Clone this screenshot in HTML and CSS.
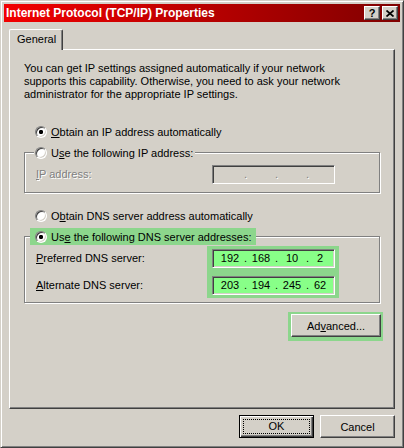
FILE: index.html
```html
<!DOCTYPE html>
<html lang="en">
<head>
    <meta charset="UTF-8">
    <meta name="viewport" content="width=device-width, initial-scale=1.0">
    <title>Internet Protocol (TCP/IP) Properties</title>
    <link rel="stylesheet" href="styles.css">
</head>
<body>
    <div class="window">
        <div class="titlebar">
            <span class="title">Internet Protocol (TCP/IP) Properties</span>
            <div class="caption-buttons">
                <button class="cap-btn help">?</button>
                <button class="cap-btn close">
                    <svg width="8" height="7" viewBox="0 0 8 7"><path d="M0.5 0.5 L7.5 6.5 M7.5 0.5 L0.5 6.5" stroke="#000" stroke-width="1.7" fill="none"/></svg>
                </button>
            </div>
        </div>

        <div class="client">
            <div class="tabs">
                <div class="tab active">General</div>
            </div>

            <div class="panel">
                <p class="intro">You can get IP settings assigned automatically if your network<br>supports this capability. Otherwise, you need to ask your network<br>administrator for the appropriate IP settings.</p>

                <!-- IP address -->
                <div class="option first"><span class="radio on"></span><span><u>O</u>btain an IP address automatically</span></div>
                <fieldset class="group">
                    <legend class="option"><span class="radio"></span><span>U<u>s</u>e the following IP address:</span></legend>
                    <div class="field-row">
                        <span class="label disabled"><u>I</u>P address:</span>
                        <div class="ipbox disabled">
                            <span class="octet"></span><span class="dot">.</span>
                            <span class="octet"></span><span class="dot">.</span>
                            <span class="octet"></span><span class="dot">.</span>
                            <span class="octet last"></span>
                        </div>
                    </div>
                </fieldset>

                <!-- DNS -->
                <div class="option spaced"><span class="radio"></span><span>O<u>b</u>tain DNS server address automatically</span></div>
                <fieldset class="group dns">
                    <legend class="option hl"><span class="radio on"></span><span>Us<u>e</u> the following DNS server addresses:</span></legend>
                    <div class="dns-grid">
                        <div class="dns-labels">
                            <span class="label"><u>P</u>referred DNS server:</span>
                            <span class="label"><u>A</u>lternate DNS server:</span>
                        </div>
                        <div class="dns-boxes">
                            <div class="ipbox green">
                                <span class="octet">192</span><span class="dot">.</span>
                                <span class="octet">168</span><span class="dot">.</span>
                                <span class="octet">10</span><span class="dot">.</span>
                                <span class="octet last">2</span>
                            </div>
                            <div class="ipbox green">
                                <span class="octet">203</span><span class="dot">.</span>
                                <span class="octet">194</span><span class="dot">.</span>
                                <span class="octet">245</span><span class="dot">.</span>
                                <span class="octet last">62</span>
                            </div>
                        </div>
                    </div>
                </fieldset>

                <div class="advanced-row">
                    <div class="hilite">
                        <button class="btn wide">Ad<u>v</u>anced...</button>
                    </div>
                </div>
            </div>

            <div class="dialog-buttons">
                <button class="btn default"><span class="focus">OK</span></button>
                <button class="btn">Cancel</button>
            </div>
        </div>
    </div>
</body>
</html>
```

FILE: styles.css
```css
* {
    box-sizing: border-box;
    margin: 0;
    padding: 0;
}

body {
    background-color: #d4d0c8;
    font-family: "Liberation Sans", Arial, sans-serif;
    font-size: 11px;
    color: #000;
}

button {
    font: inherit;
    color: #000;
    background: #d4d0c8;
}

.window {
    width: 404px;
    height: 448px;
    border: 1px solid;
    border-color: #d4d0c8 #404040 #404040 #d4d0c8;
    box-shadow: inset 1px 1px #fff, inset -1px -1px #808080;
    padding: 3px;
}

/* title bar */
.titlebar {
    height: 18px;
    display: flex;
    align-items: center;
    justify-content: space-between;
    padding: 0 2px 0 2px;
    background: linear-gradient(to right, #f20000, #800000);
}

.title {
    color: #fff;
    font-weight: bold;
    font-size: 12px;
}

.caption-buttons {
    display: flex;
    gap: 2px;
}

.cap-btn {
    width: 16px;
    height: 14px;
    display: flex;
    align-items: center;
    justify-content: center;
    border: 1px solid;
    border-color: #fff #404040 #404040 #fff;
    box-shadow: inset -1px -1px #808080;
    font-weight: bold;
    font-size: 11px;
    line-height: 12px;
}

/* tabs */
.client {
    padding: 7px 5px 0;
}

.tabs {
    display: flex;
}

.tab {
    position: relative;
    z-index: 1;
    width: 54px;
    height: 21px;
    margin-bottom: -1px;
    padding-left: 7px;
    line-height: 19px;
    border: 1px solid;
    border-bottom: 0;
    border-color: #fff #404040 #fff #fff;
    border-radius: 2px 2px 0 0;
    box-shadow: inset -1px 0 #808080;
    background: #d4d0c8;
}

.panel {
    height: 360px;
    border: 1px solid;
    border-color: #fff #404040 #404040 #fff;
    box-shadow: inset -1px -1px #808080;
    padding: 12px 13px 0 14px;
}

.intro {
    line-height: 13px;
}

/* radio options */
.option {
    display: flex;
    align-items: center;
    height: 17px;
    margin-left: 11px;
    white-space: nowrap;
}

.option.first {
    margin-top: 22px;
}

.option.spaced {
    margin-top: 14px;
}

.radio {
    width: 12px;
    height: 12px;
    flex-shrink: 0;
    margin-right: 4px;
    border-radius: 50%;
    border: 1px solid;
    border-color: #808080 #fff #fff #808080;
    box-shadow: inset 1px 1px #404040, inset -1px -1px #d4d0c8;
    background: #fff;
}

.radio.on {
    background: radial-gradient(circle, #000 1.9px, #fff 2.4px);
}

/* group boxes */
.group {
    border: 1px solid #808080;
    box-shadow: 1px 1px #fff, inset 1px 1px #fff;
    margin: 4px 1px 0 0;
    padding: 4px 0 8px 11px;
    min-width: 0;
}

.group.dns {
    padding-top: 1px;
    padding-bottom: 4px;
}

.group legend.option {
    margin-left: -2px;
    padding: 0 2px 0 1px;
    background: #d4d0c8;
}

.group legend.option.hl {
    margin-left: -6px;
    padding: 0 4px 0 5px;
    background: #8cd68c;
}

.field-row {
    display: grid;
    grid-template-columns: 176px 123px;
    align-items: center;
}

.label {
    line-height: 19px;
    white-space: nowrap;
}

.disabled {
    color: #808080;
    text-shadow: 1px 1px #fff;
}

/* ip address boxes */
.ipbox {
    display: flex;
    width: 123px;
    height: 19px;
    padding-left: 5px;
    line-height: 17px;
    border: 1px solid;
    border-color: #808080 #fff #fff #808080;
    box-shadow: inset 1px 1px #404040, inset -1px -1px #d4d0c8;
    background: #fff;
}

.ipbox.disabled {
    background: #d4d0c8;
}

.ipbox.green {
    background: #88ff88;
}

.octet {
    width: 24px;
    text-align: center;
}

.octet.last {
    width: 18px;
}

.dot {
    width: 7px;
    text-align: center;
}

.dns-grid {
    display: flex;
}

.dns-labels {
    width: 171px;
    padding-top: 3px;
    display: flex;
    flex-direction: column;
    gap: 8px;
}

.dns-boxes {
    display: flex;
    flex-direction: column;
    gap: 8px;
    padding: 3px 4px 3px 5px;
    background: #8cd68c;
}

/* buttons */
.advanced-row {
    display: flex;
    justify-content: flex-end;
    margin: 9px -2px 0 0;
}

.hilite {
    padding: 2px 2px 4px 3px;
    background: #8cd68c;
}

.btn {
    width: 75px;
    height: 23px;
    border: 1px solid;
    border-color: #fff #404040 #404040 #fff;
    box-shadow: inset -1px -1px #808080;
}

.btn.wide {
    width: 90px;
}

.btn.default {
    border-color: #000;
    box-shadow: inset 1px 1px #fff, inset -1px -1px #404040, inset -2px -2px #808080;
    padding: 3px;
}

.focus {
    display: block;
    height: 100%;
    border: 1px dotted #000;
    line-height: 13px;
}

.dialog-buttons {
    display: flex;
    justify-content: flex-end;
    gap: 6px;
    margin-top: 6px;
}
```
